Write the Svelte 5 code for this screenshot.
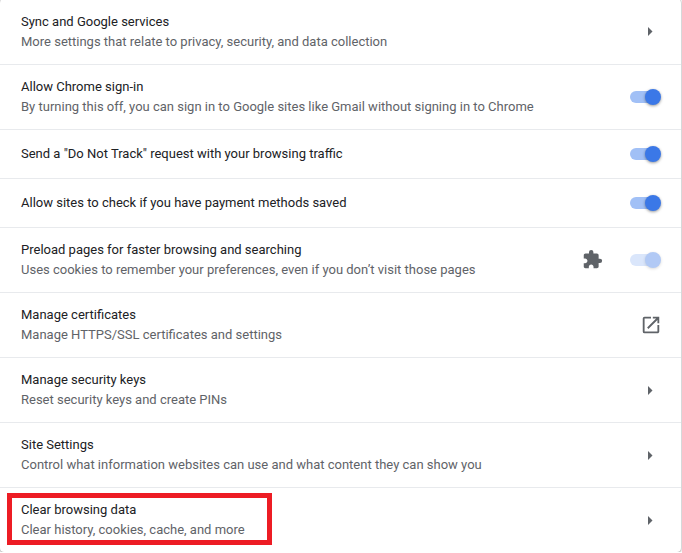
<script lang="ts">
	const rows = [
		{ title: 'Sync and Google services', sub: 'More settings that relate to privacy, security, and data collection', end: 'arrow' },
		{ title: 'Allow Chrome sign-in', sub: 'By turning this off, you can sign in to Google sites like Gmail without signing in to Chrome', end: 'toggle' },
		{ title: 'Send a "Do Not Track" request with your browsing traffic', end: 'toggle' },
		{ title: 'Allow sites to check if you have payment methods saved', end: 'toggle' },
		{ title: 'Preload pages for faster browsing and searching', sub: 'Uses cookies to remember your preferences, even if you don’t visit those pages', end: 'managed' },
		{ title: 'Manage certificates', sub: 'Manage HTTPS/SSL certificates and settings', end: 'external' },
		{ title: 'Manage security keys', sub: 'Reset security keys and create PINs', end: 'arrow' },
		{ title: 'Site Settings', sub: 'Control what information websites can use and what content they can show you', end: 'arrow' },
		{ title: 'Clear browsing data', sub: 'Clear history, cookies, cache, and more', end: 'arrow', marked: true }
	];
</script>

<div class="card">
	{#each rows as row}
		<div class="row" class:single={!row.sub}>
			<div class="text">
				<div class="title">{row.title}</div>
				{#if row.sub}
					<div class="sub">{row.sub}</div>
				{/if}
			</div>
			{#if row.end === 'arrow'}
				<svg class="arrow" width="5" height="9" viewBox="0 0 5 9"><path fill="#5f6368" d="M0 0 4.5 4.5 0 9Z" /></svg>
			{:else if row.end === 'external'}
				<svg class="external" width="22" height="22" viewBox="0 0 24 24">
					<path fill="#5f6368" d="M19 19H5V5h7V3H5a2 2 0 0 0-2 2v14a2 2 0 0 0 2 2h14c1.1 0 2-.9 2-2v-7h-2v7zM14 3v2h3.59l-9.83 9.83 1.41 1.41L19 6.41V10h2V3h-7z" />
				</svg>
			{:else}
				{#if row.end === 'managed'}
					<svg class="puzzle" width="21" height="21" viewBox="0 0 24 24">
						<path fill="#5f6368" d="M20.5 11H19V7c0-1.1-.9-2-2-2h-4V3.5a2.5 2.5 0 0 0-5 0V5H4c-1.1 0-1.99.9-1.99 2v3.8H3.5c1.49 0 2.7 1.21 2.7 2.7s-1.21 2.7-2.7 2.7H2V20c0 1.1.9 2 2 2h3.8v-1.5c0-1.49 1.21-2.7 2.7-2.7s2.7 1.21 2.7 2.7V22H17c1.1 0 2-.9 2-2v-4h1.5a2.5 2.5 0 0 0 0-5z" />
					</svg>
				{/if}
				<div class="toggle" class:dim={row.end === 'managed'}>
					<span class="knob"></span>
				</div>
			{/if}
			{#if row.marked}
				<div class="mark"></div>
			{/if}
		</div>
	{/each}
</div>

<style>
	:global(body) {
		background: #fff;
		overflow: hidden;
	}

	.card {
		width: 681px;
		height: 553px;
		margin-top: -1px;
		box-sizing: border-box;
		background: #fff;
		border-radius: 4px;
		box-shadow: 0 0 2px rgba(60, 64, 67, 0.5), 0 1px 2px rgba(60, 64, 67, 0.3);
		font-family: Roboto, sans-serif;
		font-size: 13px;
	}

	.row {
		position: relative;
		display: flex;
		align-items: center;
		height: 65px;
		box-sizing: border-box;
		padding: 0 21px;
		border-top: 1px solid #e8eaed;
	}

	.row:first-child {
		border-top: none;
	}

	.row.single {
		height: 49px;
	}

	.text {
		flex: 1;
		line-height: 20px;
	}

	.title {
		color: #202124;
	}

	.sub {
		color: #5f6368;
	}

	.arrow {
		margin-right: 7px;
	}

	.external {
		margin-right: -2px;
	}

	.puzzle {
		margin-right: 27px;
		margin-top: -1px;
	}

	.toggle {
		position: relative;
		width: 30px;
		height: 12px;
		border-radius: 6px;
		background: #a1c0f6;
	}

	.knob {
		position: absolute;
		top: -2px;
		right: -1px;
		width: 16px;
		height: 16px;
		border-radius: 50%;
		background: #3b78e7;
		box-shadow: 0 1px 3px rgba(0, 0, 0, 0.4);
	}

	.toggle.dim {
		background: #dae6fb;
	}

	.toggle.dim .knob {
		background: #b1c9f5;
		box-shadow: 0 1px 3px rgba(0, 0, 0, 0.15);
	}

	.mark {
		position: absolute;
		left: 7px;
		top: 5px;
		width: 265px;
		height: 52px;
		box-sizing: border-box;
		border: 5px solid #ed1c24;
	}
</style>
